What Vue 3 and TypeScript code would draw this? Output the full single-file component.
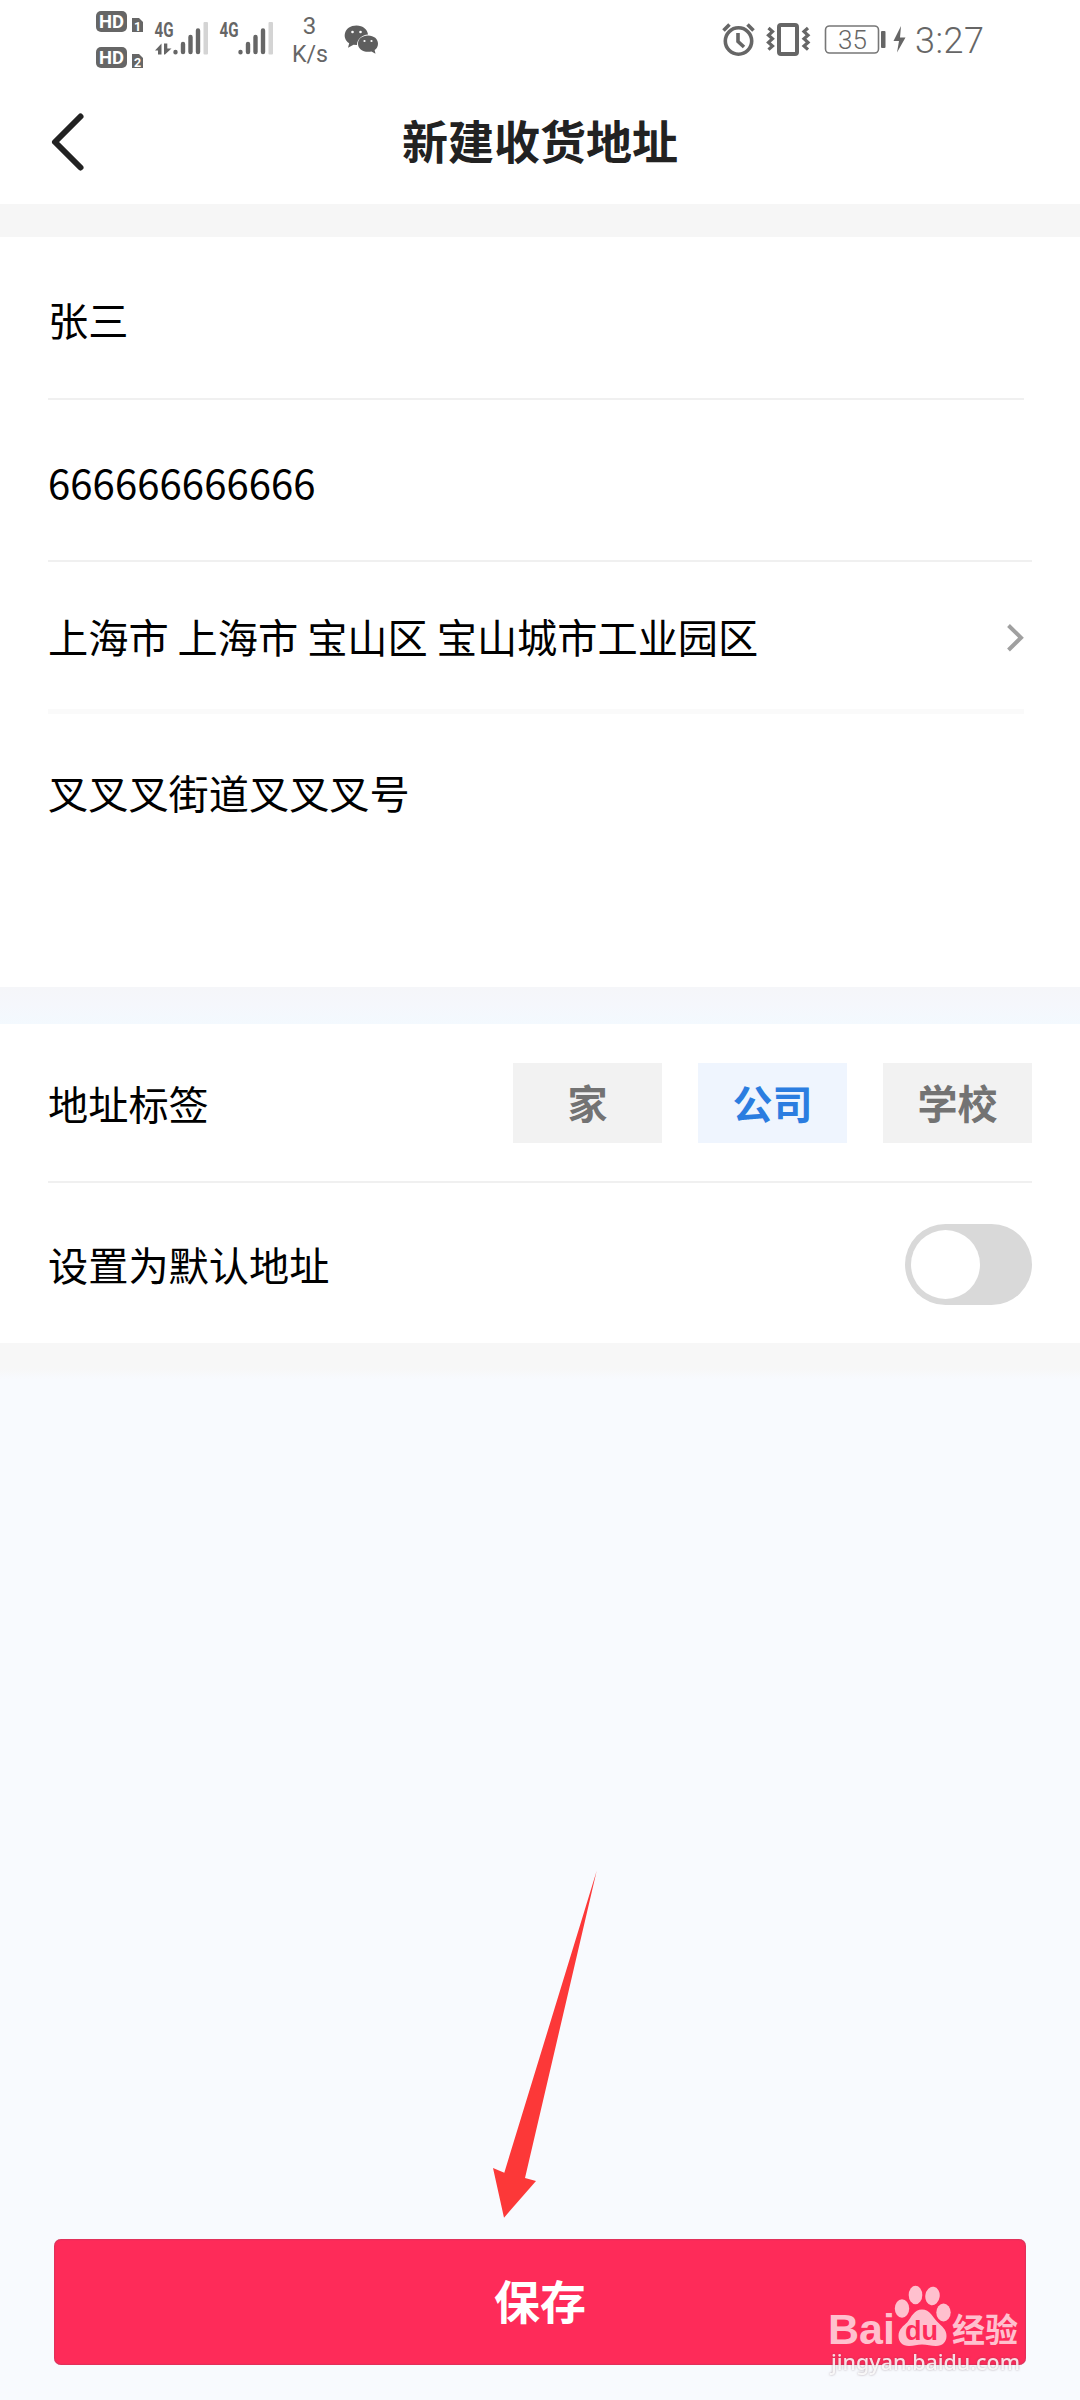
<script setup lang="ts">
import { ref } from 'vue'

interface Tag {
  id: string
  label: string
}

const name = ref('张三')
const phone = ref('666666666666')
const region = ref('上海市 上海市 宝山区 宝山城市工业园区')
const detail = ref('叉叉叉街道叉叉叉号')
const tags: Tag[] = [
  { id: 'home', label: '家' },
  { id: 'company', label: '公司' },
  { id: 'school', label: '学校' },
]
const activeTag = ref('company')
const isDefault = ref(false)
</script>

<template>
  <div class="page">
    <div class="status">
      <svg class="status-left" width="300" height="80" viewBox="80 0 300 80">
        <g v-for="n in 2" :key="n" :transform="`translate(0 ${(n - 1) * 36})`">
          <rect x="96" y="11" width="31" height="21" rx="5" fill="#666" />
          <text x="99" y="28" class="hd" textLength="25" lengthAdjust="spacingAndGlyphs">HD</text>
          <path d="M132 18H139L143 22V32H132Z" fill="#666" />
          <text x="134" y="30.5" class="sim">{{ n }}</text>
        </g>
        <g v-for="x in [0, 65]" :key="x" :transform="`translate(${x} 0)`">
          <text x="154.5" y="36.5" class="net" textLength="19" lengthAdjust="spacingAndGlyphs">4G</text>
          <g fill="none" stroke="#666" stroke-width="4.4" stroke-linecap="round">
            <path d="M175.5 52v.2M183 44v8M190.500 37v15M198 30.500v21.500" />
          </g>
          <rect x="203.500" y="22" width="4.500" height="32.500" rx="1" fill="#d4d4d4" />
        </g>
        <path d="M155 50.500L161.500 43.500V54.500H158V50.500ZM164 43.500H167.300V48.500H171.500L165 54.500H164Z" fill="#666" />
        <text x="309.500" y="33.500" class="speed" text-anchor="middle">3</text>
        <text x="292" y="62" class="speed" textLength="36" lengthAdjust="spacingAndGlyphs">K/s</text>
        <path d="M356.500 25.500c6.600 0 11 4 11.500 9-6 .5-11 4.500-11 10.500l-3.500-.3-5.500 3 1.200-4.500c-8-5-5-17.700 7.300-17.700Z" fill="#5e5e5e" />
        <path d="M368 35.500c6 0 10 3.600 10 8.200 0 2.800-1.400 4.900-3.400 6.400l.9 3.600-4-2.200c-8 1.500-13.500-2.500-13.500-7.800 0-4.600 4-8.200 10-8.200Z" fill="#5e5e5e" />
        <g fill="#fff"><circle cx="352.500" cy="32" r="1.300" /><circle cx="360.500" cy="32" r="1.300" /><circle cx="364.500" cy="41" r="1.100" /><circle cx="371.500" cy="41" r="1.100" /></g>
      </svg>
      <svg class="status-right" width="300" height="80" viewBox="700 0 300 80">
        <g fill="none" stroke="#666" stroke-width="3.600">
          <circle cx="738.500" cy="41" r="13.200" />
          <path d="M738 33V41.500L744 47" />
          <path d="M723.500 30.500L729.500 24.500M753.500 30.500L747.500 24.500" />
        </g>
        <rect x="779" y="25" width="18" height="29" rx="2" fill="none" stroke="#666" stroke-width="4" />
        <path d="M768.500 28l4 3.600-4 3.600 4 3.600-4 3.600 4 3.600-4 3.600M808 28l-4 3.600 4 3.600-4 3.600 4 3.600-4 3.600 4 3.600" fill="none" stroke="#666" stroke-width="3.200" />
        <rect x="825.500" y="26" width="53" height="27" rx="4" fill="none" stroke="#777" stroke-width="1.600" />
        <text x="852.500" y="49" class="battery" text-anchor="middle">35</text>
        <rect x="881" y="31" width="4.500" height="17" rx="1" fill="#666" />
        <path d="M901 26L893.500 41H899L897 52.500L905.500 37.500H900Z" fill="#666" />
        <text x="915" y="53" class="clock" textLength="69">3:27</text>
      </svg>
    </div>

    <header class="header">
      <svg class="back" width="40" height="64" viewBox="0 0 40 64">
        <path d="M32.500 6.500L7 32L32.500 57.500" fill="none" stroke="#222" stroke-width="6" stroke-linecap="round" stroke-linejoin="round" />
      </svg>
      <h1>新建收货地址</h1>
    </header>

    <div class="band"></div>

    <section class="card">
      <div class="row name"><span>{{ name }}</span></div>
      <div class="row phone"><span>{{ phone }}</span></div>
      <div class="row region">
        <span>{{ region }}</span>
        <svg width="20" height="32" viewBox="0 0 20 32">
          <path d="M2.500 3.500L15 15.700L2.500 28" fill="none" stroke="#a0a0a0" stroke-width="4" />
        </svg>
      </div>
      <div class="row detail"><span>{{ detail }}</span></div>
    </section>

    <div class="band blue"></div>

    <section class="card">
      <div class="row tag-row">
        <span>地址标签</span>
        <div class="tags">
          <button
            v-for="tag in tags"
            :key="tag.id"
            class="tag"
            :class="{ active: tag.id === activeTag }"
            @click="activeTag = tag.id"
          >{{ tag.label }}</button>
        </div>
      </div>
      <div class="row default-row">
        <span>设置为默认地址</span>
        <button class="toggle" :class="{ on: isDefault }" @click="isDefault = !isDefault"><i></i></button>
      </div>
    </section>

    <div class="band low"></div>

    <footer class="footer">
      <button class="save">保存</button>
    </footer>

    <svg class="arrow" width="60" height="360" viewBox="485 1865 60 360">
      <path d="M596.700 1870.700L504.300 2172.700L493 2168L504 2217.700L536 2181L525 2178Z" fill="#fc3838" />
    </svg>

    <svg class="watermark" width="210" height="120" viewBox="820 2275 210 120">
      <g fill="#ffc0ce">
        <text x="828" y="2344" class="wm-latin" textLength="67" lengthAdjust="spacingAndGlyphs">Bai</text>
        <ellipse cx="902" cy="2308.500" rx="7.200" ry="9.300" />
        <ellipse cx="915.500" cy="2295" rx="6.800" ry="9.300" />
        <ellipse cx="932.500" cy="2296" rx="7.200" ry="9.300" transform="rotate(8 932.500 2296)" />
        <ellipse cx="943.500" cy="2312.500" rx="7.200" ry="9" />
        <path d="M922 2309.500c8 0 11 8 15 12 5 5 9.500 8 9.500 14.500 0 6-4 10-10.500 10-5 0-9-1.500-14-1.500s-8 1.500-13 1.500c-6.500 0-10.500-4-10.500-10 0-7 5-10 9-14 4-5 6.500-12.500 14.500-12.500Z" />
        <text x="952" y="2341.500" class="wm-cjk" textLength="66" lengthAdjust="spacingAndGlyphs">经验</text>
      </g>
      <text x="905" y="2340" class="wm-du" textLength="33" lengthAdjust="spacingAndGlyphs">du</text>
      <text x="831" y="2369.500" class="wm-url" textLength="189" lengthAdjust="spacingAndGlyphs">jingyan.baidu.com</text>
    </svg>
  </div>
</template>

<style>
body {
  margin: 0;
}
</style>

<style scoped>
.page {
  position: relative;
  display: flex;
  flex-direction: column;
  width: 1080px;
  height: 2400px;
  overflow: hidden;
  background: #f8fafe;
  color: #000;
  font-family: "Noto Sans CJK SC", sans-serif;
  font-size: 40.200px;
}
button {
  border: 0;
  padding: 0;
  font-family: inherit;
}
.status {
  display: flex;
  justify-content: space-between;
  height: 80px;
  padding: 0 80px;
  background: #fff;
}
.status text {
  fill: #666;
  font-family: Roboto, sans-serif;
}
.status .hd {
  fill: #fff;
  font-size: 19px;
  font-weight: 700;
}
.status .sim {
  fill: #fff;
  font-size: 12.500px;
  font-weight: 700;
}
.status .net {
  font-size: 20px;
  font-weight: 700;
}
.status .speed {
  font-size: 24px;
  font-weight: 400;
}
.status .battery {
  font-size: 26px;
  font-weight: 300;
}
.status .clock {
  font-size: 36px;
  font-weight: 300;
}
.header {
  display: grid;
  grid-template-columns: 48px 1fr 48px;
  align-items: center;
  height: 124px;
  padding: 0 48px;
  box-sizing: border-box;
  background: #fff;
}
.header h1 {
  margin: 0;
  padding-bottom: 7px;
  color: #222;
  font-size: 46px;
  font-weight: 700;
  line-height: 60px;
  text-align: center;
}
.band {
  height: 33px;
  background: #f6f6f6;
}
.band.blue {
  height: 37px;
  background: linear-gradient(#f5f6f9, #f5f7fc 50%, #f3f9fe);
}
.band.low {
  height: 36px;
  background: linear-gradient(#f7f7f7 70%, #f8fafe);
}
.card {
  padding: 0 48px;
  background: #fff;
}
.row {
  display: flex;
  align-items: center;
  justify-content: space-between;
  box-sizing: border-box;
  line-height: 60px;
  border-bottom: 2px solid #f0f0f0;
}
.name {
  height: 163px;
  margin-right: 8px;
  padding-top: 3px;
}
.phone {
  height: 162px;
  padding-top: 3px;
}
.region {
  height: 152px;
  margin-right: 8px;
  padding-top: 1px;
  border-bottom: 5px solid #fafafa;
}
.region svg {
  margin: 3px -2px 0 0;
}
.detail {
  height: 273px;
  align-items: flex-start;
  padding-top: 48px;
  border: 0;
}
.tag-row {
  height: 159px;
}
.tags {
  display: flex;
  gap: 36px;
}
.tag {
  width: 149px;
  height: 80px;
  background: #f2f2f2;
  color: #737373;
  font-size: 40px;
  font-weight: 700;
  line-height: 79px;
}
.tag.active {
  background: #eff5fe;
  color: #2b7de0;
}
.default-row {
  height: 160px;
  padding-top: 2px;
  border: 0;
}
.toggle {
  display: flex;
  width: 127px;
  height: 81px;
  padding: 6px;
  margin-top: 1px;
  border-radius: 41px;
  background: #d9d9d9;
}
.toggle i {
  width: 69px;
  height: 69px;
  border-radius: 50%;
  background: #fff;
}
.toggle.on {
  justify-content: flex-end;
}
.footer {
  margin-top: auto;
  padding: 0 54px 35px;
}
.save {
  display: block;
  width: 972px;
  height: 126px;
  padding-bottom: 6px;
  border-radius: 7px;
  background: #fe2b59;
  box-shadow: inset 0 0 2px #94405f;
  color: #fff;
  font-size: 46px;
  font-weight: 700;
  line-height: 120px;
}
.arrow {
  position: absolute;
  left: 485px;
  top: 1865px;
  overflow: visible;
}
.watermark {
  position: absolute;
  left: 820px;
  top: 2275px;
}
.wm-latin {
  font: 700 43px "Liberation Sans", sans-serif;
}
.wm-cjk {
  font: 700 33px "Noto Sans CJK SC", sans-serif;
}
.wm-du {
  fill: #fe2b59;
  font: 700 27px "Liberation Sans", sans-serif;
}
.wm-url {
  fill: #fff;
  fill-opacity: 0.85;
  font: 500 22px "Noto Sans", sans-serif;
  filter: drop-shadow(0 0 1px rgba(90, 60, 70, 0.5));
}
</style>
